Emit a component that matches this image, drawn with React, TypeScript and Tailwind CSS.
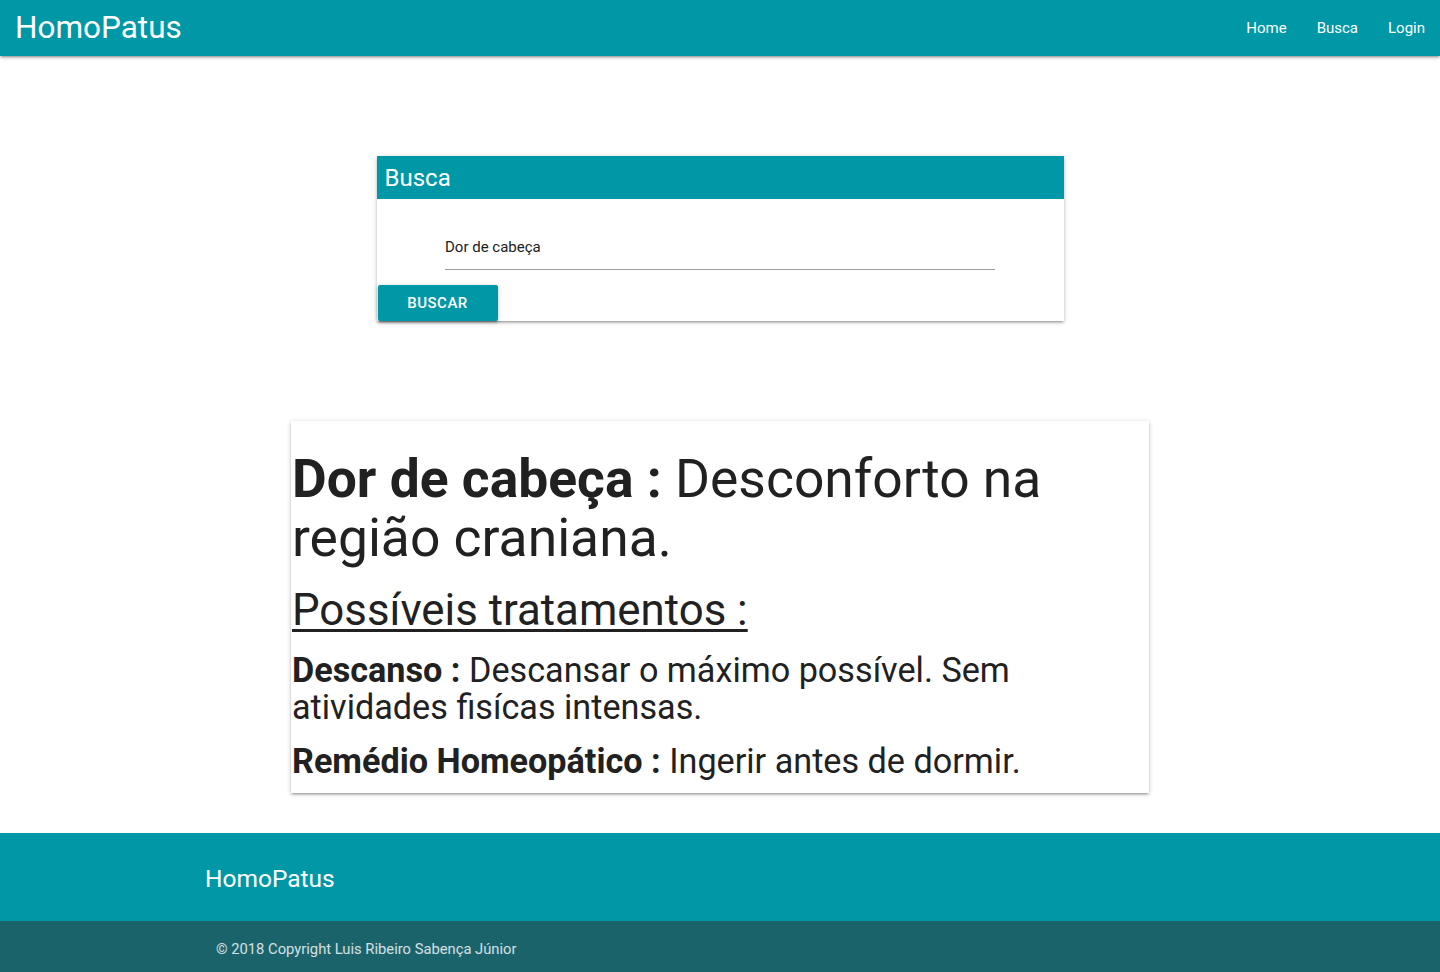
export default function App() {
  return (
    <div className="min-h-screen bg-white font-['Roboto',sans-serif] text-[#212121]">
      <nav className="h-14 bg-[#0097a7] flex items-center justify-between shadow-[0_2px_2px_0_rgba(0,0,0,0.14),0_3px_1px_-2px_rgba(0,0,0,0.12),0_1px_5px_0_rgba(0,0,0,0.2)] relative z-10">
        <a className="pl-[15px] text-[31.5px] leading-[56px] text-white">HomoPatus</a>
        <ul className="flex">
          {["Home", "Busca", "Login"].map((l) => (
            <li key={l}>
              <a className="block px-[15px] text-[15px] leading-[56px] text-white">{l}</a>
            </li>
          ))}
        </ul>
      </nav>

      <main className="flex flex-col items-center pt-[100px] pb-10">
        <div className="w-[687px] bg-white shadow-[0_2px_2px_0_rgba(0,0,0,0.14),0_3px_1px_-2px_rgba(0,0,0,0.12),0_1px_5px_0_rgba(0,0,0,0.2)]">
          <div className="h-[43px] bg-[#0097a7] px-2 flex items-center">
            <span className="text-[24px] text-white">Busca</span>
          </div>
          <div className="pt-[33px]">
            <div className="w-[550px] mx-auto border-b border-[#9e9e9e] pb-[7px]">
              <span className="text-[15px] leading-[30px] text-[#212121] block">Dor de cabeça</span>
            </div>
          </div>
          <div className="pt-[15px] pl-px">
            <button className="h-9 w-[120px] bg-[#0097a7] text-white text-[15px] tracking-[0.5px] font-medium uppercase rounded-[2px] shadow-[0_2px_2px_0_rgba(0,0,0,0.14),0_3px_1px_-2px_rgba(0,0,0,0.12),0_1px_5px_0_rgba(0,0,0,0.2)]">
              Buscar
            </button>
          </div>
        </div>

        <div className="w-[858px] mt-[100px] bg-white pl-px pt-[29px] pb-[13px] shadow-[0_2px_2px_0_rgba(0,0,0,0.14),0_3px_1px_-2px_rgba(0,0,0,0.12),0_1px_5px_0_rgba(0,0,0,0.2)]">
          <h2 className="text-[53.4px] leading-[58.7px]">
            <b className="font-bold">Dor de cabeça :</b> Desconforto na região craniana.
          </h2>
          <h3 className="mt-[19px] text-[43.8px] leading-[48.2px]">
            <u className="decoration-[3px] underline-offset-[4px]">Possíveis tratamentos :</u>
          </h3>
          <p className="mt-[17px] text-[34.2px] leading-[37.6px]">
            <b className="font-bold">Descanso :</b> Descansar o máximo possível. Sem atividades fisícas intensas.
          </p>
          <p className="mt-[16px] text-[34.2px] leading-[37.6px]">
            <b className="font-bold">Remédio Homeopático :</b> Ingerir antes de dormir.
          </p>
        </div>
      </main>

      <footer>
        <div className="h-[88px] bg-[#0097a7] flex items-center pl-[205px] pt-[4px]">
          <span className="text-[24.5px] text-white">HomoPatus</span>
        </div>
        <div className="h-[51px] bg-[#1b636b] flex items-center pl-[216px] pt-[4px]">
          <span className="text-[14.75px] text-white/80">© 2018 Copyright Luis Ribeiro Sabença Júnior</span>
        </div>
      </footer>
    </div>
  );
}
